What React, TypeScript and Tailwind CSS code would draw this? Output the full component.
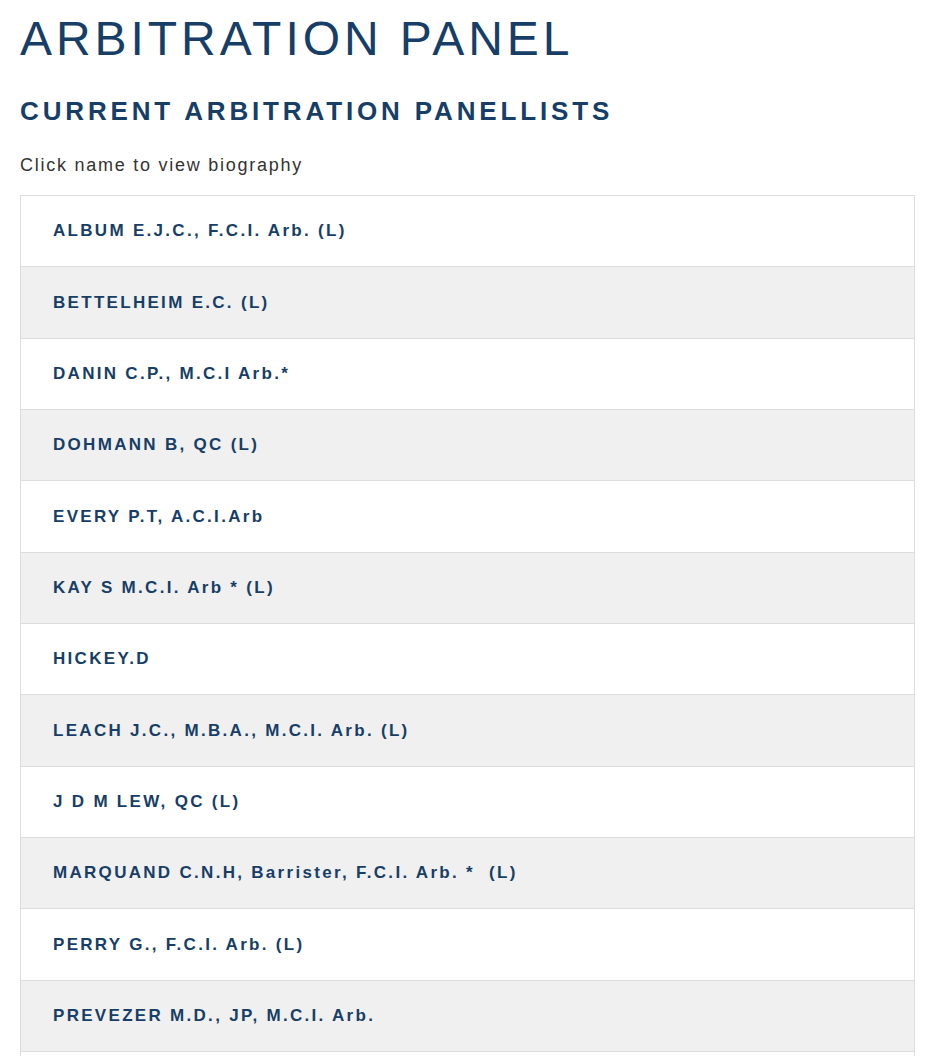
const panellists = [
  'ALBUM E.J.C., F.C.I. Arb. (L)',
  'BETTELHEIM E.C. (L)',
  'DANIN C.P., M.C.I Arb.*',
  'DOHMANN B, QC (L)',
  'EVERY P.T, A.C.I.Arb',
  'KAY S M.C.I. Arb * (L)',
  'HICKEY.D',
  'LEACH J.C., M.B.A., M.C.I. Arb. (L)',
  'J D M LEW, QC (L)',
  'MARQUAND C.N.H, Barrister, F.C.I. Arb. *\u00a0 (L)',
  'PERRY G., F.C.I. Arb. (L)',
  'PREVEZER M.D., JP, M.C.I. Arb.',
  '',
];

export default function App() {
  return (
    <div className="min-h-screen bg-white pl-5 pr-[14px] pt-[15px] font-['Liberation_Sans',Arial,sans-serif]">
      <h1 className="text-[48px] leading-[48px] tracking-[3.95px] text-[#173e66]">
        ARBITRATION PANEL
      </h1>
      <h2 className="mt-[35px] text-[26px] leading-[26px] font-bold tracking-[3.85px] text-[#173e66]">
        CURRENT ARBITRATION PANELLISTS
      </h2>
      <p className="mt-[32px] text-[18px] leading-[18px] tracking-[1.75px] text-[#333333]">
        Click name to view biography
      </p>
      <div className="mt-[21px] border-x border-[#dddddd]">
        {panellists.map((name, i) => (
          <a
            key={i}
            href="#"
            className={`box-border flex h-[71.33px] items-center border-t border-[#dddddd] pl-8 text-[17px] font-bold tracking-[2.3px] text-[#173e66] ${
              i % 2 === 1 ? 'bg-[#f0f0f0]' : 'bg-white'
            }`}
          >
            {name}
          </a>
        ))}
      </div>
    </div>
  );
}
